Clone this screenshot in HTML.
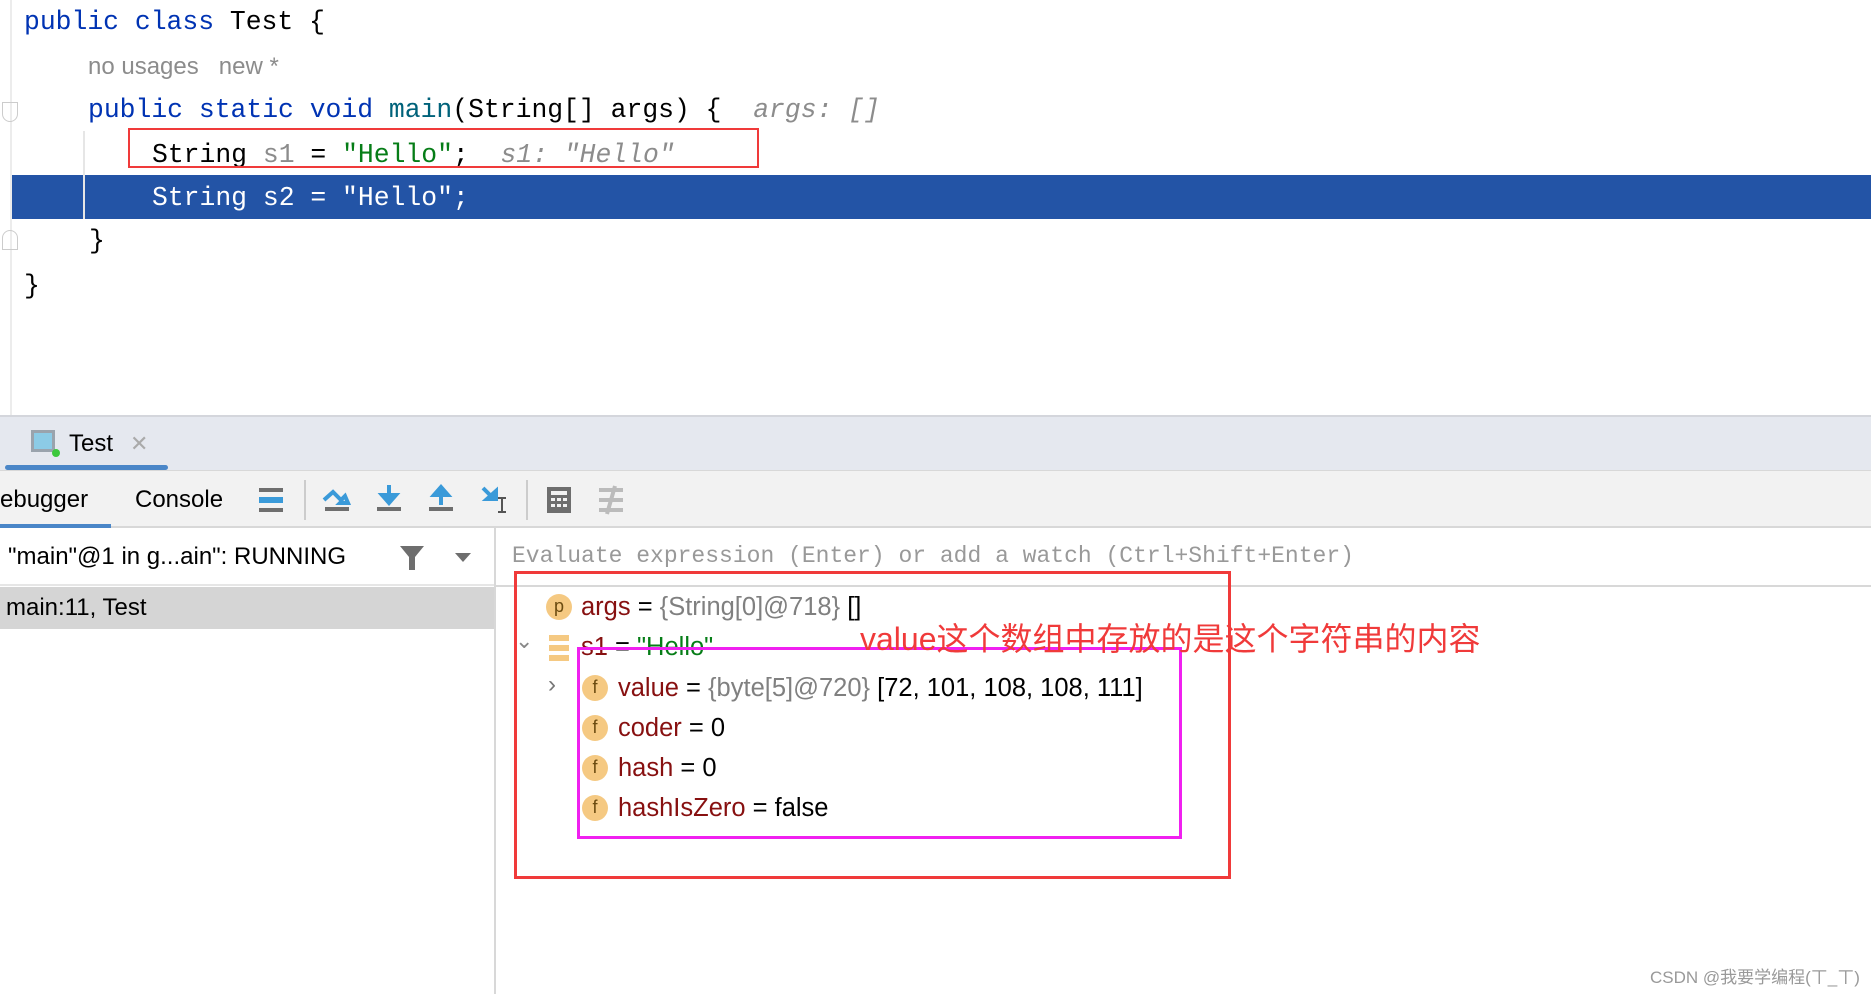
<!DOCTYPE html>
<html><head><meta charset="utf-8"><style>
*{margin:0;padding:0;box-sizing:border-box}
body{width:1871px;height:994px;background:#fff;position:relative;overflow:hidden;font-family:"Liberation Sans",sans-serif}
.a{position:absolute;white-space:pre}
.m{font-family:"Liberation Mono",monospace;font-size:26.4px;line-height:30px}
.kw{color:#0033b3}.fn{color:#00627a}.st{color:#067d17}.gr{color:#8c8c8c}
.v{font-size:25.5px;line-height:30px;color:#000}
.nm{color:#871010}.gy{color:#808080}
.ic{position:absolute;width:26px;height:26px;border-radius:13px;background:#f5c982;color:#6b4b10;font-size:18px;line-height:24px;text-align:center}
</style></head><body>
<div class="a" style="left:10px;top:0;width:2px;height:415px;background:#ececec"></div>
<div class="a" style="left:12px;top:175px;width:1859px;height:44px;background:#2354a6"></div>
<div class="a" style="left:83px;top:131px;width:2px;height:88px;background:#e6e6e6"></div>
<div class="a m" style="left:24px;top:7px"><span class="kw">public class</span> Test {</div>
<div class="a gr" style="left:88px;top:53px;font-size:24px">no usages   new *</div>
<div class="a m" style="left:88px;top:95px"><span class="kw">public static void</span> <span class="fn">main</span>(String[] args) {  <i class="gr">args: []</i></div>
<div class="a m" style="left:152px;top:140px">String <span class="gr">s1</span> = <span class="st">"Hello"</span>;  <i class="gr">s1: "Hello"</i></div>
<div class="a m" style="left:152px;top:183px;color:#fff">String s2 = "Hello";</div>
<div class="a m" style="left:89px;top:226px">}</div>
<div class="a m" style="left:24px;top:271px">}</div>
<div class="a" style="left:128px;top:128px;width:631px;height:40px;border:2px solid #f03a3a"></div>
<div class="a" style="left:2px;top:102px;width:16px;height:20px;border:1px solid #ccc;border-radius:0 0 8px 8px"></div>
<div class="a" style="left:2px;top:230px;width:16px;height:20px;border:1px solid #ccc;border-radius:8px 8px 0 0"></div>
<div class="a" style="left:0;top:415px;width:1871px;height:55px;background:#e5e8ef;border-top:2px solid #d4d6dc"></div>
<div class="a" style="left:31px;top:430px;width:24px;height:22px;border:3px solid #9aa3ad;background:#8ccbe6"></div>
<div class="a" style="left:52px;top:449px;width:8px;height:8px;border-radius:4px;background:#3cc83c"></div>
<div class="a" style="left:69px;top:430px;font-size:24px">Test</div>
<div class="a" style="left:130px;top:431px;font-size:22px;color:#aaa">✕</div>
<div class="a" style="left:5px;top:465px;width:163px;height:5px;background:#4a86c8;border-radius:3px"></div>
<div class="a" style="left:0;top:470px;width:1871px;height:58px;background:#f2f2f2;border-top:1px solid #d8d8d8;border-bottom:2px solid #d8d8d8"></div>
<div class="a" style="left:0;top:486px;font-size:24px">ebugger</div>
<div class="a" style="left:135px;top:486px;font-size:24px">Console</div>
<div class="a" style="left:0;top:524px;width:111px;height:4px;background:#4a86c8"></div>
<svg class="a" style="left:240px;top:470px" width="400" height="58" viewBox="0 0 400 58">
<rect x="19" y="18" width="24" height="4" fill="#6e6e6e"/><rect x="19" y="27" width="24" height="6" fill="#3a9ad9"/><rect x="19" y="38" width="24" height="4" fill="#6e6e6e"/>
<rect x="64" y="10" width="2" height="40" fill="#ccc"/>
<rect x="85" y="37" width="24" height="4" fill="#6e6e6e"/><path d="M84 30 L93 22 L101 30 L105 26 L108 33 L100 33 L103 30" stroke="#3a9ad9" stroke-width="4" fill="none"/>
<rect x="137" y="37" width="24" height="4" fill="#6e6e6e"/><path d="M149 15 V30 M142 25 L149 33 L156 25 Z" stroke="#3a9ad9" stroke-width="4" fill="#3a9ad9"/>
<rect x="189" y="37" width="24" height="4" fill="#6e6e6e"/><path d="M201 35 V22 M194 25 L201 17 L208 25 Z" stroke="#3a9ad9" stroke-width="4" fill="#3a9ad9"/>
<path d="M243 18 L253 28 M247 29 L256 29 L256 21 Z" stroke="#3a9ad9" stroke-width="4" fill="#3a9ad9"/><path d="M258 28 H266 M262 28 V42 M258 42 H266" stroke="#555" stroke-width="2" fill="none"/>
<rect x="286" y="10" width="2" height="40" fill="#ccc"/>
<rect x="307" y="17" width="24" height="26" fill="#6e6e6e"/><rect x="311" y="21" width="16" height="4" fill="#f2f2f2"/>
<g fill="#f2f2f2"><rect x="311" y="28" width="4" height="3"/><rect x="317" y="28" width="4" height="3"/><rect x="323" y="28" width="4" height="3"/><rect x="311" y="34" width="4" height="3"/><rect x="317" y="34" width="4" height="3"/><rect x="323" y="34" width="4" height="3"/></g>
<path d="M359 20 H383 M359 30 H383 M359 40 H383 M375 16 L367 44" stroke="#bbb" stroke-width="4" fill="none"/>
</svg>
<div class="a" style="left:494px;top:528px;width:2px;height:466px;background:#d8d8d8"></div>
<div class="a" style="left:0;top:584px;width:494px;height:2px;background:#e6e6e6"></div>
<div class="a" style="left:8px;top:543px;font-size:24px">"main"@1 in g...ain": RUNNING</div>
<svg class="a" style="left:398px;top:544px" width="80" height="28"><path d="M2 2 H26 L17 13 V26 H11 V13 Z" fill="#6e6e6e"/><path d="M57 9 H73 L65 18 Z" fill="#6e6e6e"/></svg>
<div class="a" style="left:0;top:587px;width:494px;height:42px;background:#d5d5d5"></div>
<div class="a" style="left:6px;top:594px;font-size:24px">main:11, Test</div>
<div class="a" style="left:512px;top:543px;font-family:'Liberation Mono',monospace;font-size:23px;color:#999">Evaluate expression (Enter) or add a watch (Ctrl+Shift+Enter)</div>
<div class="a" style="left:496px;top:585px;width:1375px;height:2px;background:#d8d8d8"></div>
<div class="ic" style="left:546px;top:594px">p</div>
<div class="a v" style="left:581px;top:592px"><span class="nm">args</span> = <span class="gy">{String[0]@718}</span> []</div>
<div class="a" style="left:515px;top:628px;font-size:22px;color:#888">⌄</div>
<svg class="a" style="left:549px;top:635px" width="20" height="26"><rect y="0" width="20" height="6" fill="#f5c982"/><rect y="10" width="20" height="6" fill="#f5c982"/><rect y="20" width="20" height="6" fill="#f5c982"/></svg>
<div class="a v" style="left:581px;top:632px"><span class="nm">s1</span> = <span class="st">"Hello"</span></div>
<div class="a" style="left:548px;top:671px;font-size:24px;color:#777">›</div>
<div class="ic" style="left:582px;top:675px">f</div>
<div class="a v" style="left:618px;top:673px"><span class="nm">value</span> = <span class="gy">{byte[5]@720}</span> [72, 101, 108, 108, 111]</div>
<div class="ic" style="left:582px;top:715px">f</div>
<div class="a v" style="left:618px;top:713px"><span class="nm">coder</span> = 0</div>
<div class="ic" style="left:582px;top:755px">f</div>
<div class="a v" style="left:618px;top:753px"><span class="nm">hash</span> = 0</div>
<div class="ic" style="left:582px;top:795px">f</div>
<div class="a v" style="left:618px;top:793px"><span class="nm">hashIsZero</span> = false</div>
<div class="a" style="left:514px;top:571px;width:717px;height:308px;border:3px solid #f03a3a"></div>
<div class="a" style="left:577px;top:647px;width:605px;height:192px;border:3px solid #f020f0"></div>
<div class="a" style="left:860px;top:614px;font-size:32px;color:#f03a3a;font-family:'Liberation Sans','Noto Sans CJK SC',sans-serif">value这个数组中存放的是这个字符串的内容</div>
<div class="a" style="left:1650px;top:963px;font-size:17px;color:#999;font-family:'Liberation Sans','Noto Sans CJK SC',sans-serif">CSDN @我要学编程(ㄒ_ㄒ)</div>
</body></html>
